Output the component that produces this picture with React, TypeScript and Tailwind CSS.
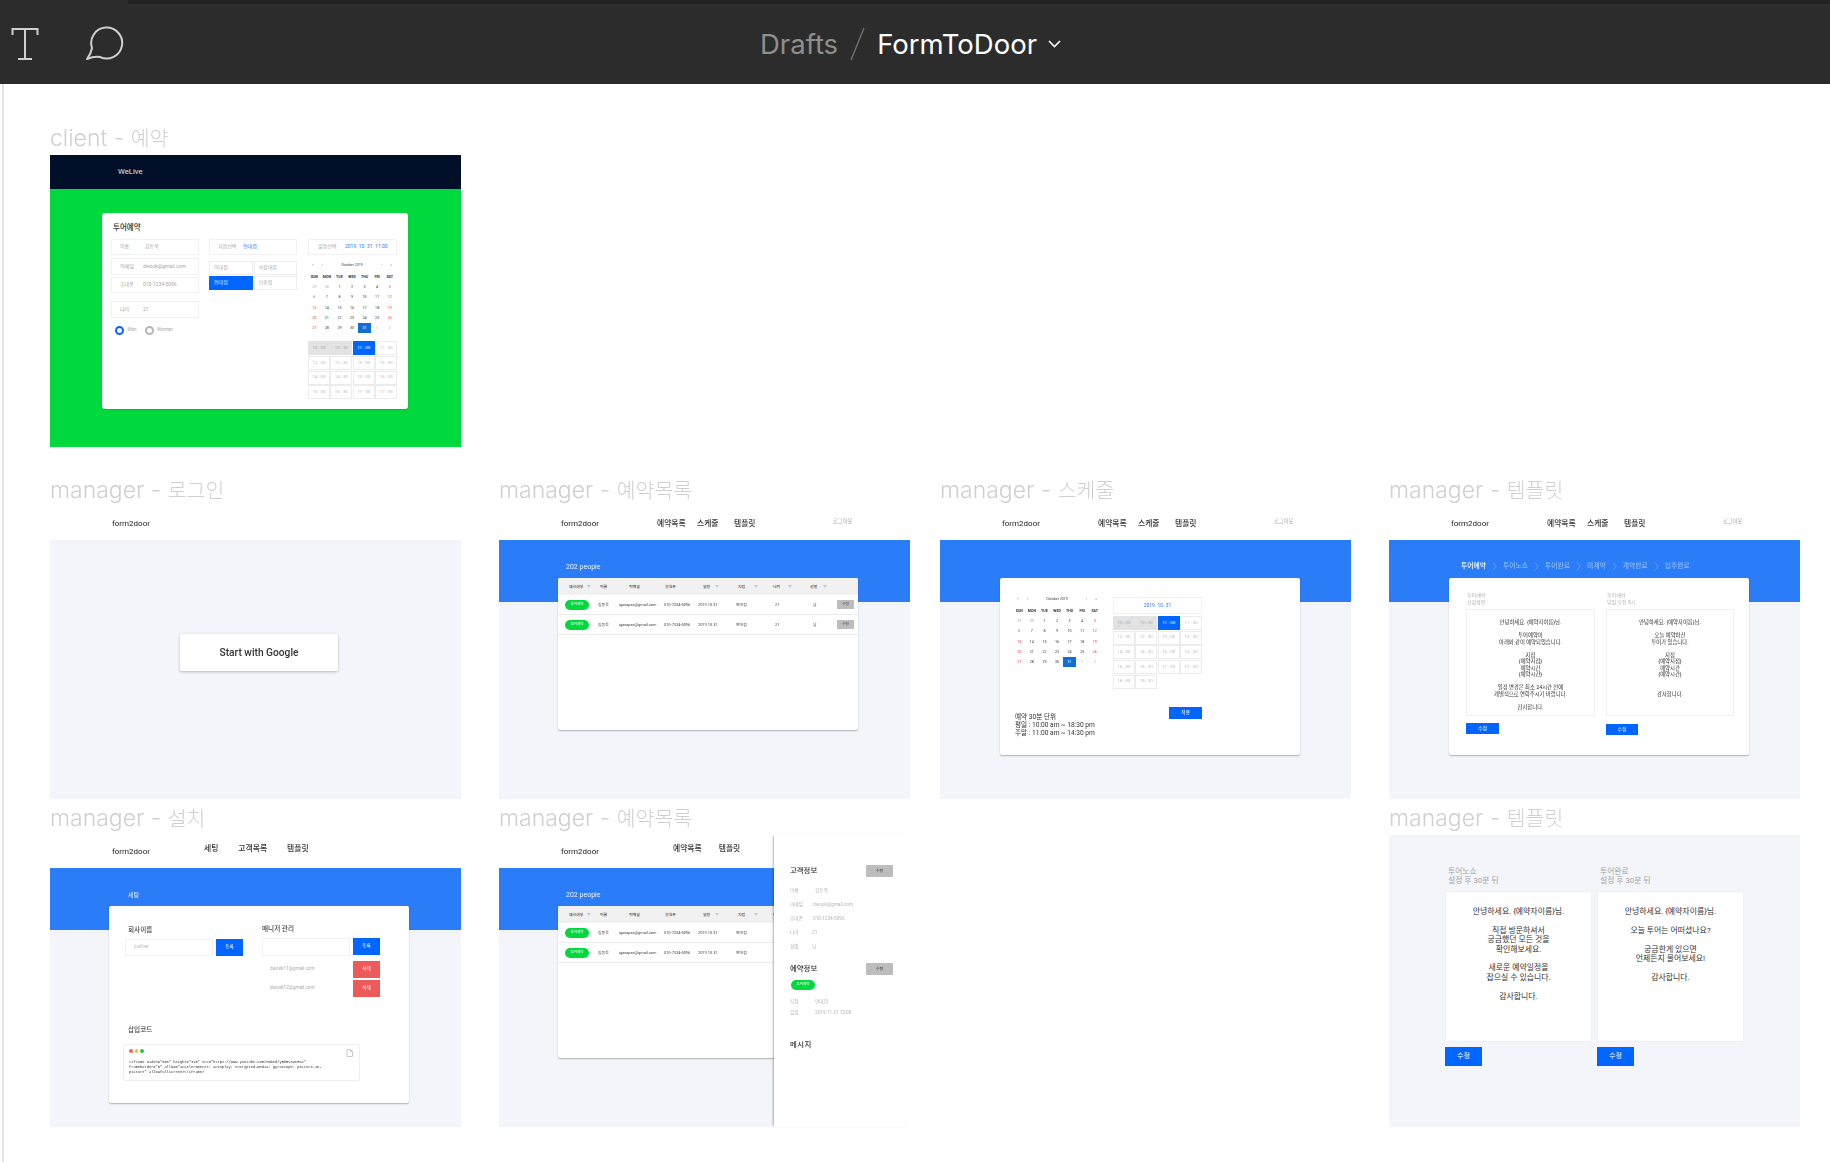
import React from 'react';

const times = ['10 : 00', '10 : 30', '11 : 00', '11 : 30', '12 : 00', '12 : 30', '13 : 00', '13 : 30', '14 : 00', '14 : 30', '15 : 00', '15 : 30', '16 : 00', '16 : 30', '17 : 00', '17 : 30', '18 : 00', '18 : 30'];
const weeks = [
  ['29', '30', '1', '2', '3', '4', '5'],
  ['6', '7', '8', '9', '10', '11', '12'],
  ['13', '14', '15', '16', '17', '18', '19'],
  ['20', '21', '22', '23', '24', '25', '26'],
  ['27', '28', '29', '30', '31', '1', '2'],
];
const days = ['SUN', 'MON', 'TUE', 'WED', 'THU', 'FRI', 'SAT'];

const Title: React.FC<{ latin: string; hangul: string; className: string }> = ({ latin, hangul, className }) => (
  <div className={`absolute whitespace-nowrap font-['Inter','Noto_Sans_CJK_KR',sans-serif] text-[23px] leading-[28px] font-light text-[#d0d0d0] ${className}`}>
    {latin} <span className="text-[20.5px]">{hangul}</span>
  </div>
);

const Calendar: React.FC = () => (
  <div className="w-[88px] text-[3.6px] leading-[10.2px] text-[#333]">
    <div className="flex h-[10px] items-center justify-between px-[4px] text-[#444]">
      <div className="flex gap-[8px]"><span>«</span><span>‹</span></div>
      <span>October 2019</span>
      <div className="flex gap-[8px]"><span>›</span><span>»</span></div>
    </div>
    <div className="mt-[2px] grid grid-cols-7 text-center font-bold">
      {days.map((d) => <span key={d}>{d}</span>)}
    </div>
    {weeks.map((row, i) => (
      <div key={i} className="grid grid-cols-7 text-center">
        {row.map((d, j) => {
          const picked = i === 4 && j === 4;
          const dim = (i === 0 && j < 2) || (i === 4 && j > 4);
          const red = j === 0 || j === 6;
          return (
            <span
              key={j}
              className={picked ? 'bg-[#0f6fd8] text-white' : dim ? 'text-[#aaa]' : red ? 'text-[#e8394a]' : ''}
            >
              {d}
            </span>
          );
        })}
      </div>
    ))}
  </div>
);

const TimeGrid: React.FC<{ count: number; crossed?: boolean }> = ({ count, crossed }) => (
  <div className="grid w-[89px] grid-cols-4 auto-rows-[14px] gap-[0.7px]">
    {times.slice(0, count).map((t, i) => (
      <div
        key={t}
        className={`relative flex items-center justify-center border text-[4.4px] ${
          i < 2
            ? 'border-[#e3e3e3] bg-[#e3e3e3] text-[#aaa]'
            : i === 2
              ? 'border-[#0066ff] bg-[#0066ff] text-white'
              : 'border-[#ececec] bg-white text-[#bbb]'
        }`}
      >
        {t}
        {crossed && i < 2 && (
          <svg className="absolute inset-0 h-full w-full" viewBox="0 0 22 14" preserveAspectRatio="none">
            <path d="M0 0L22 14M22 0L0 14" stroke="#cfcfcf" strokeWidth="0.5" />
          </svg>
        )}
      </div>
    ))}
  </div>
);

const Field: React.FC<{ label: string; value: string; h: string; vx: string }> = ({ label, value, h, vx }) => (
  <div className={`flex items-center border border-[#f1f1f1] pl-[8px] text-[5px] text-[#a8a8a8] ${h}`}>
    <span className={vx}>{label}</span>
    <span>{value}</span>
  </div>
);

const Radio: React.FC<{ on?: boolean; label: string }> = ({ on, label }) => (
  <div className="flex items-center gap-[3.5px] text-[4.6px] text-[#aaa]">
    <span className={`h-[9px] w-[9px] rounded-full border-[2px] ${on ? 'border-[#0066ff]' : 'border-[#b5b5b5]'}`} />
    {label}
  </div>
);

const BranchCell: React.FC<{ text: string; on?: boolean }> = ({ text, on }) => (
  <div className={`flex h-[14px] items-center border pl-[4px] text-[5px] ${on ? 'border-[#0066ff] bg-[#0066ff] text-white/80' : 'border-[#ededed] text-[#aaa]'}`}>
    {text}
  </div>
);

const ClientFrame: React.FC = () => (
  <div className="absolute left-[50px] top-[71px] flex h-[292px] w-[411px] flex-col bg-[#00d93d]">
    <div className="flex h-[34px] items-center bg-[#020f28] pl-[68px] text-[7.7px] text-white/90">WeLive</div>
    <div className="absolute left-[52px] top-[58px] h-[196px] w-[306px] rounded-[3px] bg-white px-[9px] pt-[9px] shadow-[0_1px_1px_rgba(0,0,0,0.12)]">
      <div className="pl-[2px] text-[7.5px] leading-[12px] font-medium text-[#333]">투어예약</div>
      <div className="mt-[5px] flex">
        <div className="w-[88px]">
          <Field label="이름" value="김동욱" h="h-[16px]" vx="w-[25px]" />
          <div className="mt-[3px]"><Field label="이메일" value="dwook@gmail.com" h="h-[17px]" vx="w-[23px]" /></div>
          <div className="mt-[2px]"><Field label="휴대폰" value="010-1234-5096" h="h-[16px]" vx="w-[23px]" /></div>
          <div className="mt-[8px]"><Field label="나이" value="21" h="h-[17px]" vx="w-[23px]" /></div>
          <div className="mt-[8px] flex gap-[8px] pl-[4px]">
            <Radio on label="Man" />
            <Radio label="Woman" />
          </div>
        </div>
        <div className="ml-[10px] w-[88px]">
          <div className="flex h-[16px] items-center border border-[#f1f1f1] pl-[8px] text-[5px] text-[#a8a8a8]">
            <span className="w-[25px]">지점선택</span>
            <span className="text-[#2f7cf6]">연대점</span>
          </div>
          <div className="mt-[6px] grid grid-cols-2 gap-x-[1px] gap-y-[1px]">
            <BranchCell text="이대점" />
            <BranchCell text="서강대점" />
            <BranchCell text="연대점" on />
            <BranchCell text="신촌점" />
          </div>
        </div>
        <div className="ml-[11px] w-[89px]">
          <div className="flex h-[16px] items-center border border-[#f1f1f1] pl-[9px] text-[5px] text-[#a8a8a8]">
            <span className="w-[27px]">일정선택</span>
            <span className="whitespace-nowrap text-[#2f7cf6]">2019. 10. 31 &nbsp;11:00</span>
          </div>
          <div className="mt-[5px]"><Calendar /></div>
          <div className="mt-[8px]"><TimeGrid count={16} /></div>
        </div>
      </div>
    </div>
  </div>
);

const ManagerFrame: React.FC<{ className: string; nav: React.ReactNode; logout?: boolean; children?: React.ReactNode; blue?: boolean }> = ({ className, nav, logout, children, blue = true }) => (
  <div className={`absolute flex h-[292px] w-[411px] flex-col bg-white ${className}`}>
    <div className="relative flex h-[33px] items-center pl-[62px] text-[8px] text-[#222]">
      <span className="w-[96px] shrink-0">form2door</span>
      <div className="text-[7.8px] font-medium text-[#333]">{nav}</div>
      {logout && <span className="absolute left-[334px] top-[11px] text-[5.3px] text-[#aaa]">로그아웃</span>}
    </div>
    {blue && <div className="h-[62px] bg-[#2b7cf7]" />}
    <div className="flex-1 bg-[#f3f5fa]" />
    {children}
  </div>
);

const Card: React.FC<{ h: string; left?: string; children: React.ReactNode; className?: string }> = ({ h, left = 'left-[59px]', children, className = '' }) => (
  <div className={`absolute top-[71px] w-[300px] rounded-[2px] bg-white shadow-[0_1px_1.5px_rgba(0,0,0,0.28)] ${left} ${h} ${className}`}>
    {children}
  </div>
);

const heads: [string, string, string | null][] = [
  ['체크여부', 'pl-[11px]', 'ml-[4px]'],
  ['이름', 'pl-[9px]', 'ml-[5px]'],
  ['이메일', 'pl-[17px]', null],
  ['휴대폰', 'pl-[8px]', null],
  ['일정', 'pl-[12px]', 'ml-[5px]'],
  ['지점', 'pl-[9px]', 'ml-[9px]'],
  ['나이', 'pl-[5px]', 'ml-[8px]'],
  ['성별', 'pl-[4px]', 'ml-[6px]'],
];

const gridCols = 'grid grid-cols-[33px_21px_45px_34px_38px_39px_38px_26px_1fr] items-center';

const Row: React.FC = () => (
  <div className={`${gridCols} h-[20px] border-b border-[#ececec] text-[3.9px] text-[#444]`}>
    <span className="ml-[7px] flex h-[10px] w-[24px] items-center justify-center rounded-full bg-[#00d93d] text-[3.6px] text-white">투어예약</span>
    <span className="pl-[7px]">김동욱</span>
    <span className="whitespace-nowrap pl-[7px]">igasapex@gmail.com</span>
    <span className="whitespace-nowrap pl-[7px]">010-7334-5096</span>
    <span className="whitespace-nowrap pl-[7px]">2019.10.31</span>
    <span className="pl-[7px]">연대점</span>
    <span className="pl-[7px]">21</span>
    <span className="pl-[7px]">남</span>
    <span className="ml-[5px] flex h-[9px] w-[17px] items-center justify-center bg-[#bdbdbd] text-[3.6px] text-[#333]">수정</span>
  </div>
);

const ListTable: React.FC = () => (
  <>
    <div className={`${gridCols} h-[17px] rounded-t-[2px] bg-[#f1f1f1] text-[3.9px] font-medium text-[#444]`}>
      {heads.map(([label, pad, funnel]) => (
        <span key={label} className={`flex items-center whitespace-nowrap ${pad}`}>
          {label}
          {funnel && (
            <svg className={`inline-block h-[3px] w-[4px] ${funnel}`} viewBox="0 0 4 3"><path d="M0 0H4L2 3Z" fill="#c8c8c8" /></svg>
          )}
        </span>
      ))}
    </div>
    <Row />
    <Row />
  </>
);

const LoginFrame: React.FC = () => (
  <ManagerFrame className="left-[50px] top-[423px]" nav={null} blue={false}>
    <div className="absolute left-[130px] top-[127px] flex h-[37px] w-[158px] items-center justify-center rounded-[2px] bg-white text-[10.2px] font-medium text-[#333] shadow-[0_1px_3px_rgba(0,0,0,0.25)]">
      Start with Google
    </div>
  </ManagerFrame>
);

const navMain = (
  <div className="flex gap-[11px] whitespace-nowrap">
    <span className="w-[29px]">예약목록</span>
    <span className="w-[26px]">스케줄</span>
    <span>템플릿</span>
  </div>
);

const ReservationFrame: React.FC = () => (
  <ManagerFrame className="left-[499px] top-[423px]" nav={navMain} logout>
    <div className="absolute left-[67px] top-[55px] text-[7px] text-white/90">202 people</div>
    <Card h="h-[152px]"><ListTable /></Card>
  </ManagerFrame>
);

const ScheduleFrame: React.FC = () => (
  <ManagerFrame className="left-[940px] top-[423px]" nav={navMain} logout>
    <Card h="h-[177px]" left="left-[60px]" className="flex flex-col pl-[13px] pt-[19px]">
      <div className="flex">
        <div className="mr-[12px] -mt-[3px]"><Calendar /></div>
        <div className="w-[89px]">
          <div className="flex h-[17px] items-center justify-center border border-[#f1f1f1] text-[5px] text-[#2f7cf6]">2019. 10. 31</div>
          <div className="mt-[2px]"><TimeGrid count={18} crossed /></div>
        </div>
      </div>
      <div className="mt-[18px] flex w-[189px] items-start justify-between">
        <div className="mt-[6px] pl-[2px] whitespace-nowrap text-[6.6px] leading-[8px] text-[#333]">
          예약 30분 단위<br />평일 : 10:00 am ~ 18:30 pm<br />주말 : 11:00 am ~ 14:30 pm
        </div>
        <div className="flex h-[12px] w-[33px] items-center justify-center bg-[#0066ff] text-[5px] text-white">적용</div>
      </div>
    </Card>
  </ManagerFrame>
);

const steps = ['투어예약', '투어노쇼', '투어완료', '미계약', '계약완료', '입주완료'];

const Message: React.FC<{ lines: string[]; size: string }> = ({ lines, size }) => (
  <div className={`text-center whitespace-pre text-[#333] ${size}`}>
    {lines.map((l, i) => <div key={i} className="min-h-[1lh]">{l}</div>)}
  </div>
);

const TemplateFrame: React.FC = () => (
  <ManagerFrame className="left-[1389px] top-[423px]" nav={navMain} logout>
    <div className="absolute left-[72px] top-[54px] flex items-center text-[6.8px] font-medium text-[#8fbcff]">
      {steps.map((s, i) => (
        <React.Fragment key={s}>
          <span className={`whitespace-nowrap ${i === 0 ? 'text-white' : ''}`}>{s}</span>
          {i < 5 && (
            <svg className="mx-[6px] h-[9px] w-[5px]" viewBox="0 0 5 9" fill="none"><path d="M1 0.5L4 4.5L1 8.5" stroke="#8fbcff" strokeWidth="0.5" /></svg>
          )}
        </React.Fragment>
      ))}
    </div>
    <Card h="h-[177px]" left="left-[60px]" className="flex gap-[11px] pl-[17px] pt-[14px]">
      <div className="w-[129px]">
        <div className="pl-[1px] text-[5px] leading-[7px] text-[#b0b0b0]">투어예약<br />신청확인</div>
        <div className="mt-[3px] h-[107px] border border-[#f0f0f0] pt-[9px]">
          <Message size="text-[5.35px] leading-[6.55px]" lines={['안녕하세요. {예약자이름}님.', '', '투어예약이', '아래와 같이 예약되었습니다.', '', '지점', '{예약지점}', '예약시간', '{예약시간}', '', '일정 변경은 최소 24시간 전에', '개별적으로 연락주시기 바랍니다.', '', '감사합니다.']} />
        </div>
        <div className="mt-[7px] flex h-[11px] w-[33px] items-center justify-center bg-[#0066ff] text-[5px] text-white">수정</div>
      </div>
      <div className="w-[128px]">
        <div className="pl-[1px] text-[5px] leading-[7px] text-[#b0b0b0]">투어예약<br />당일 오전 8시</div>
        <div className="mt-[3px] h-[107px] border border-[#f0f0f0] pt-[9px]">
          <Message size="text-[5.35px] leading-[6.55px]" lines={['안녕하세요. {예약자이름}님.', '', '오늘 예약하신', '투어가 있습니다.', '', '지점', '{예약지점}', '예약시간', '{예약시간}', '', '', '감사합니다.']} />
        </div>
        <div className="mt-[8px] flex h-[11px] w-[32px] items-center justify-center bg-[#0066ff] text-[5px] text-white">수정</div>
      </div>
    </Card>
  </ManagerFrame>
);

const Blue: React.FC<{ children: string; red?: boolean }> = ({ children, red }) => (
  <div className={`ml-[3px] flex h-[17px] w-[27px] shrink-0 items-center justify-center text-[4.6px] text-white ${red ? 'bg-[#ed5a5a]' : 'bg-[#0066ff]'}`}>{children}</div>
);

const SetupFrame: React.FC = () => (
  <ManagerFrame
    className="left-[50px] top-[751px]"
    nav={
      <div className="flex -translate-y-[3px] gap-[20px] whitespace-nowrap">
        <span className="-ml-[4px]">세팅</span><span>고객목록</span><span>템플릿</span>
      </div>
    }
  >
    <div className="absolute left-[78px] top-[55px] text-[6px] text-white/90">세팅</div>
    <Card h="h-[197px]" className="px-[16px] pt-[19px]">
      <div className="flex">
        <div className="w-[137px]">
          <div className="pl-[3px] text-[6.6px] leading-[10px] font-medium text-[#444]">회사이름</div>
          <div className="mt-[4px] flex">
            <div className="flex h-[17px] w-[88px] items-center border border-[#f1f1f1] pl-[8px] text-[4.6px] text-[#bbb]">justlive</div>
            <Blue>등록</Blue>
          </div>
        </div>
        <div className="-mt-[1px] w-[118px]">
          <div className="text-[6.6px] leading-[10px] font-medium text-[#444]">매니저 관리</div>
          <div className="mt-[4px] flex">
            <div className="h-[18px] w-[89px] border border-[#f1f1f1]" />
            <Blue>등록</Blue>
          </div>
          <div className="mt-[5px] flex items-center pl-[8px] text-[4.6px] text-[#aaa]">
            <span className="w-[81px]">dwook11@gmail.com</span><Blue red>삭제</Blue>
          </div>
          <div className="mt-[2px] flex items-center pl-[8px] text-[4.6px] text-[#aaa]">
            <span className="w-[81px]">dwook12@gmail.com</span><Blue red>삭제</Blue>
          </div>
        </div>
      </div>
      <div className="mt-[28px] pl-[3px] text-[6.6px] leading-[10px] font-medium text-[#444]">삽입코드</div>
      <div className="relative -ml-[2px] mt-[9px] h-[37px] w-[237px] rounded-[2px] border border-[#efefef] px-[5px] pt-[4px]">
        <div className="flex gap-[2px]">
          <span className="h-[3.5px] w-[3.5px] rounded-full bg-[#ff5f57]" />
          <span className="h-[3.5px] w-[3.5px] rounded-full bg-[#febc2e]" />
          <span className="h-[3.5px] w-[3.5px] rounded-full bg-[#28c840]" />
        </div>
        <svg className="absolute right-[6px] top-[4px] h-[8px] w-[7px]" viewBox="0 0 7 8" fill="none">
          <path d="M1 0.5H4.5L6.5 2.5V7.5H1Z" stroke="#bbb" strokeWidth="0.8" />
          <path d="M4.5 0.5V2.5H6.5" stroke="#bbb" strokeWidth="0.8" />
        </svg>
        <div className="mt-[7px] font-['Liberation_Mono',monospace] text-[3.7px] leading-[5.1px] whitespace-nowrap text-[#333]">
          {'<iframe width="560" height="315" src="https://www.youtube.com/embed/yBhBVSWcEK4"'}<br />
          {'frameborder="0" allow="accelerometer; autoplay; encrypted-media; gyroscope; picture-in-'}<br />
          {'picture" allowfullscreen></iframe>'}
        </div>
      </div>
    </Card>
  </ManagerFrame>
);

const Info: React.FC<{ label: string; value: string; w: string; h: string }> = ({ label, value, w, h }) => (
  <div className={`flex items-center text-[4.7px] text-[#b5b5b5] ${h}`}>
    <span className={w}>{label}</span><span>{value}</span>
  </div>
);

const Edit: React.FC = () => (
  <div className="flex h-[12px] w-[27px] items-center justify-center bg-[#bdbdbd] text-[3.8px] text-[#333]">수정</div>
);

const DetailFrame: React.FC = () => (
  <ManagerFrame
    className="left-[499px] top-[751px]"
    nav={
      <div className="-translate-y-[3px] flex gap-[17px] whitespace-nowrap pl-[16px]">
        <span>예약목록</span><span>템플릿</span>
      </div>
    }
  >
    <div className="absolute left-[67px] top-[55px] text-[7px] text-white/90">202 people</div>
    <Card h="h-[152px]"><ListTable /></Card>
    <div className="absolute top-0 right-0 bottom-0 w-[136px] bg-white pl-[16px] pt-[29px] shadow-[-2px_0_2px_-1px_rgba(0,0,0,0.3)]">
      <div className="flex h-[14px] items-center justify-between pr-[17px] text-[7.4px] font-medium text-[#333]"><span>고객정보</span><Edit /></div>
      <div className="mt-[6px]">
        <Info label="이름" value="김동욱" w="w-[25px]" h="h-[14px]" />
        <Info label="이메일" value="dwook@gmail.com" w="w-[23px]" h="h-[14px]" />
        <Info label="휴대폰" value="010-1234-5096" w="w-[23px]" h="h-[14px]" />
        <Info label="나이" value="21" w="w-[22px]" h="h-[14px]" />
        <Info label="성별" value="남" w="w-[22px]" h="h-[14px]" />
      </div>
      <div className="mt-[8px] flex h-[14px] items-center justify-between pr-[17px] text-[7.4px] font-medium text-[#333]"><span>예약정보</span><Edit /></div>
      <div className="ml-[1px] mt-[4px] flex h-[10px] w-[24px] items-center justify-center rounded-full bg-[#00d93d] text-[3.6px] text-white">투어예약</div>
      <div className="mt-[6px]">
        <Info label="지점" value="연대점" w="w-[25px]" h="h-[11px]" />
        <Info label="일정" value="2019.11.31 13:00" w="w-[25px]" h="h-[11px]" />
      </div>
      <div className="mt-[21px] text-[7.4px] font-medium tracking-[0.5px] text-[#333]">메시지</div>
    </div>
  </ManagerFrame>
);

const TemplateBox: React.FC<{ label: string; lines: string[] }> = ({ label, lines }) => (
  <div className="w-[147px]">
    <div className="pl-[3px] text-[7.8px] leading-[9.4px] text-[#a5a5a5]">{label}<br />설정 후 30분 뒤</div>
    <div className="mt-[5px] h-[151px] border border-[#f0f1f4] bg-white pt-[15px]">
      <Message size="text-[7.9px] leading-[9.44px]" lines={lines} />
    </div>
    <div className="mt-[5px] flex h-[19px] w-[37px] items-center justify-center bg-[#0066ff] text-[7px] text-white">수정</div>
  </div>
);

const TemplateFrame2: React.FC = () => (
  <div className="absolute left-[1389px] top-[751px] flex h-[292px] w-[411px] gap-[5px] bg-[#f3f5fa] pl-[56px] pt-[32px]">
    <TemplateBox label="투어노쇼" lines={['안녕하세요. {예약자이름}님.', '', '직접 방문하셔서', '궁금했던 모든 것을', '확인해보세요.', '', '새로운 예약일정을', '잡으실 수 있습니다.', '', '감사합니다.']} />
    <TemplateBox label="투어완료" lines={['안녕하세요. {예약자이름}님.', '', '오늘 투어는 어떠셨나요?', '', '궁금한게 있으면', '언제든지 물어보세요!', '', '감사합니다.']} />
  </div>
);

const App: React.FC = () => (
  <div className="flex h-[1162px] w-[1830px] flex-col overflow-hidden bg-white font-['Roboto','Noto_Sans_CJK_KR',sans-serif]">
    <header className="relative flex h-[84px] shrink-0 items-center bg-[#2c2c2c] pt-[4px]">
      <div className="absolute top-0 right-0 left-[128px] h-[4px] bg-[#222222]" />
      <svg className="ml-[11px] h-[34px] w-[28px]" viewBox="0 0 28 34" fill="none" stroke="#cfcfcf" strokeWidth="2">
        <path d="M1.5 8V2H26.5V8M14 2V32M7 32H21" />
      </svg>
      <svg className="ml-[45px] h-[36px] w-[40px]" viewBox="0 0 40 36" fill="none" stroke="#cfcfcf" strokeWidth="2" strokeLinejoin="round">
        <path d="M8 22A15.5 15.5 0 1 1 16 31Q10 30 3 33Q7 28 8 22Z" />
      </svg>
      <div className="ml-[636px] flex items-center font-['Inter',sans-serif] text-[27.5px] leading-[32px]">
        <span className="text-[#8f8f8f]">Drafts</span>
        <svg className="mx-[12px] h-[34px] w-[15px]" viewBox="0 0 15 34" fill="none"><path d="M14 1L1 33" stroke="#6f6f6f" strokeWidth="1.4" /></svg>
        <span className="text-white">FormToDoor</span>
        <svg className="ml-[11px] h-[8px] w-[13px]" viewBox="0 0 13 8" fill="none"><path d="M1 1L6.5 6.5L12 1" stroke="#fff" strokeWidth="1.6" /></svg>
      </div>
    </header>
    <main className="relative flex-1 blur-[0.4px]">
      <div className="absolute top-0 bottom-0 left-[2px] w-[2px] bg-[#e5e5e5]" />
      <Title latin="client -" hangul="예약" className="left-[50px] top-[40px]" />
      <ClientFrame />
      <Title latin="manager -" hangul="로그인" className="left-[50px] top-[392px]" />
      <LoginFrame />
      <Title latin="manager -" hangul="예약목록" className="left-[499px] top-[392px]" />
      <ReservationFrame />
      <Title latin="manager -" hangul="스케줄" className="left-[940px] top-[392px]" />
      <ScheduleFrame />
      <Title latin="manager -" hangul="템플릿" className="left-[1389px] top-[392px]" />
      <TemplateFrame />
      <Title latin="manager -" hangul="설치" className="left-[50px] top-[720px]" />
      <SetupFrame />
      <Title latin="manager -" hangul="예약목록" className="left-[499px] top-[720px]" />
      <DetailFrame />
      <Title latin="manager -" hangul="템플릿" className="left-[1389px] top-[720px]" />
      <TemplateFrame2 />
    </main>
  </div>
);

export default App;
